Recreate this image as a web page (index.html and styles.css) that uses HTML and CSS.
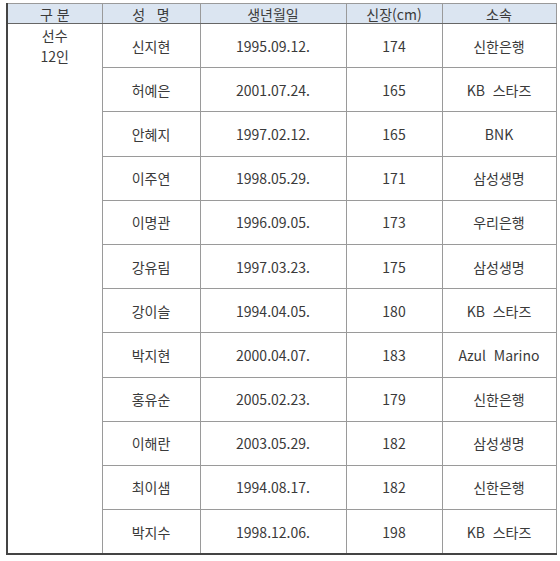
FILE: index.html
```html
<!DOCTYPE html>
<html lang="ko">
<head>
<meta charset="utf-8">
<link rel="stylesheet" href="styles.css">
</head>
<body>
<table class="roster">
  <colgroup>
    <col class="c1"><col class="c2"><col class="c3"><col class="c4"><col class="c5">
  </colgroup>
  <thead>
    <tr><th>구 분</th><th>성&nbsp;&nbsp;&nbsp;명</th><th>생년월일</th><th>신장(cm)</th><th>소속</th></tr>
  </thead>
  <tbody>
    <tr><td class="group" rowspan="12">선수<br>12인</td><td>신지현</td><td>1995.09.12.</td><td>174</td><td>신한은행</td></tr>
    <tr><td>허예은</td><td>2001.07.24.</td><td>165</td><td>KB&nbsp; 스타즈</td></tr>
    <tr><td>안혜지</td><td>1997.02.12.</td><td>165</td><td>BNK</td></tr>
    <tr><td>이주연</td><td>1998.05.29.</td><td>171</td><td>삼성생명</td></tr>
    <tr><td>이명관</td><td>1996.09.05.</td><td>173</td><td>우리은행</td></tr>
    <tr><td>강유림</td><td>1997.03.23.</td><td>175</td><td>삼성생명</td></tr>
    <tr><td>강이슬</td><td>1994.04.05.</td><td>180</td><td>KB&nbsp; 스타즈</td></tr>
    <tr><td>박지현</td><td>2000.04.07.</td><td>183</td><td>Azul&nbsp; Marino</td></tr>
    <tr><td>홍유순</td><td>2005.02.23.</td><td>179</td><td>신한은행</td></tr>
    <tr><td>이해란</td><td>2003.05.29.</td><td>182</td><td>삼성생명</td></tr>
    <tr><td>최이샘</td><td>1994.08.17.</td><td>182</td><td>신한은행</td></tr>
    <tr><td>박지수</td><td>1998.12.06.</td><td>198</td><td>KB&nbsp; 스타즈</td></tr>
  </tbody>
</table>
</body>
</html>
```
FILE: styles.css
```css
html, body {
  margin: 0;
  padding: 0;
  background: #ffffff;
}
body {
  padding: 3px 0 0 6px;
  font-family: "Noto Sans CJK KR", "Noto Sans", sans-serif;
  font-size: 14px;
  color: #3a3a3a;
}
.roster {
  border-collapse: collapse;
  table-layout: fixed;
  width: 549px;
  border-top: 1px solid #555555;
  border-right: 1px solid #444444;
  border-left: 2px solid #444444;
  border-bottom: 2px solid #444444;
}
.c1 { width: 95px; }
.c2 { width: 98px; }
.c3 { width: 146px; }
.c4 { width: 96px; }
.c5 { width: 114px; }
.roster th, .roster td {
  border: 1px solid #9a9a9a;
  text-align: center;
  padding: 0;
  line-height: 18px;
}
.roster th {
  background: #dbe5f1;
  font-weight: normal;
  height: 19px;
  font-size: 14px;
  border-bottom-color: #666666;
}
.roster td {
  height: 43.2px;
}
.roster td.group {
  vertical-align: top;
  line-height: 21px;
  padding-top: 1px;
}
```
